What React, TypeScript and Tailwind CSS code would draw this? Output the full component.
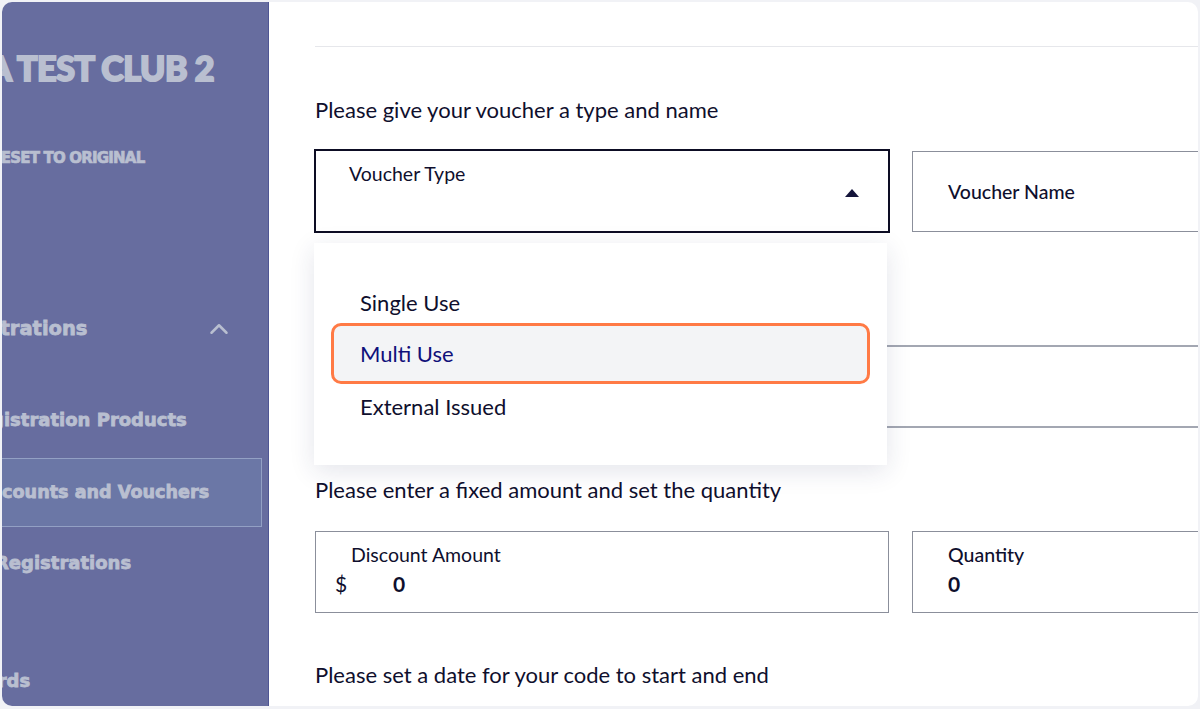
import React from "react";
import { ChevronUp } from "lucide-react";

const side = { fontFamily: "'DejaVu Sans', 'Liberation Sans', sans-serif" };

export default function App() {
  return (
    <div className="w-[1200px] h-[709px] bg-[#f1f2f6] p-[2px] overflow-hidden" style={{ fontFamily: "Lato, 'Noto Sans', sans-serif" }}>
      <div className="flex h-[704px] w-[1196px] rounded-[10px] overflow-hidden bg-white">
        {/* Sidebar */}
        <aside className="w-[267px] shrink-0 bg-[#676d9f] border-r border-[#4f5694] text-[#b9bfd0] font-bold overflow-hidden flex flex-col [-webkit-text-stroke:0.8px_#b9bfd0]">
          <div className="mt-[46px] h-[40px] leading-[40px] text-[34px] font-black whitespace-nowrap tracking-[-0.4px] [-webkit-text-stroke:2px_#b9bfd0]">
            <span className="inline-block -ml-[14px]">A TEST CLUB 2</span>
          </div>
          <div style={side} className="mt-[60px] h-[20px] leading-[20px] text-[15px] whitespace-nowrap tracking-[-0.8px] [-webkit-text-stroke:0.7px_#b9bfd0]">
            <span className="inline-block -ml-[12px]">RESET TO ORIGINAL</span>
          </div>
          <div style={side} className="mt-[146px] h-[30px] flex items-center justify-between pr-[34px] text-[19.5px]">
            <span className="whitespace-nowrap -ml-[62px]">Registrations</span>
            <ChevronUp size={30} strokeWidth={2} className="text-[#b9bfd0] shrink-0 [-webkit-text-stroke:0]" />
          </div>
          <div style={side} className="mt-[61px] h-[30px] leading-[30px] text-[18px] whitespace-nowrap">
            <span className="inline-block -ml-[37px]">Registration Products</span>
          </div>
          <div style={side} className="mt-[23px] h-[69px] w-[261px] -ml-px bg-[#6b77a6] border border-[#93a0c4] flex items-center text-[17.6px] whitespace-nowrap overflow-hidden">
            <span className="inline-block -ml-[31px]">Discounts and Vouchers</span>
          </div>
          <div style={side} className="mt-[21px] h-[30px] leading-[30px] text-[18px] whitespace-nowrap">
            <span className="inline-block -ml-[7px]">Registrations</span>
          </div>
          <div style={side} className="mt-[88px] h-[30px] leading-[30px] text-[18px] whitespace-nowrap">
            <span className="inline-block -ml-[47px]">Awards</span>
          </div>
        </aside>

        {/* Main */}
        <main className="relative flex-1 overflow-hidden text-[#0f0f2d]">
          <div className="ml-[46px] h-[45px] border-b border-[#e6e7eb]" />
          <div className="pl-[46px]">
            <p className="mt-[49px] text-[22px] leading-[28px]">Please give your voucher a type and name</p>
            <div className="mt-[25px] grid grid-cols-[575px_575px] gap-[22px] w-[1172px]">
              <div className="-ml-px h-[84px] border-2 border-[#0d0d24] relative">
                <div className="pl-[33px] pt-[11px] text-[19.5px] leading-[24px]">Voucher Type</div>
                <svg className="absolute left-[528px] top-[37px]" width="16" height="10" viewBox="0 0 16 10">
                  <polygon points="8,1 15,9 1,9" fill="#14143a" />
                </svg>
              </div>
              <div className="mt-[2px] h-[81px] border border-[#8b8f9b] flex items-center pl-[35px] text-[19.5px] font-medium">
                Voucher Name
              </div>
            </div>
            <div className="h-[114px] border-b-2 border-[#a3a7b2]" />
            <div className="h-[81px] border-b-2 border-[#a3a7b2]" />
            <p className="mt-[48px] text-[22px] leading-[28px]">Please enter a fixed amount and set the quantity</p>
            <div className="mt-[27px] grid grid-cols-[574px_575px] gap-[23px] w-[1172px]">
              <div className="h-[82px] border border-[#8b8f9b] pl-[35px] pt-[11px]">
                <div className="text-[19.5px] leading-[24px]">Discount Amount</div>
                <div className="flex items-center -ml-[16px] mt-[4px] leading-[26px]">
                  <span className="text-[21px] w-[58px]">$</span>
                  <span className="text-[21px] font-bold">0</span>
                </div>
              </div>
              <div className="h-[82px] border border-[#8b8f9b] pl-[35px] pt-[11px]">
                <div className="text-[19.5px] leading-[24px] font-medium">Quantity</div>
                <div className="mt-[4px] text-[21px] font-bold leading-[26px]">0</div>
              </div>
            </div>
            <p className="mt-[48px] text-[22px] leading-[28px]">Please set a date for your code to start and end</p>
          </div>

          {/* Dropdown menu */}
          <div className="absolute left-[45px] top-[241px] w-[573px] h-[222px] bg-white shadow-[0_6px_24px_rgba(30,40,90,0.12)] px-[17px] pt-[33px] text-[22px]">
            <div className="h-[52px] flex items-center pl-[29px]">Single Use</div>
            <div className="-mt-[5px] h-[61px] border-[3px] border-[#ff7a45] rounded-[10px] bg-[#f3f4f6] flex items-center pl-[26px] text-[#10107a]">
              Multi Use
            </div>
            <div className="-mt-[4px] h-[52px] flex items-center pl-[29px]">External Issued</div>
          </div>
        </main>
      </div>
    </div>
  );
}
